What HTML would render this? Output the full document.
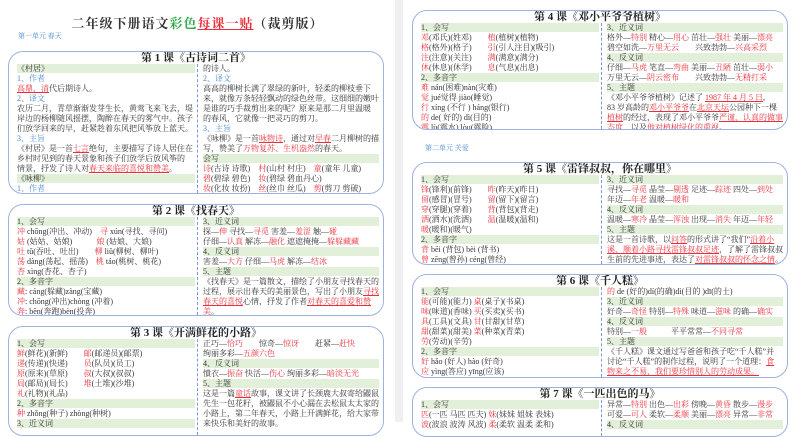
<!DOCTYPE html>
<html><head><meta charset="utf-8"><style>
*{margin:0;padding:0;box-sizing:border-box}
body{width:800px;height:422px;overflow:hidden;background:#fff;position:relative;font-family:"Liberation Serif","Noto Serif CJK SC",serif;font-size:8px;color:#333}
.pg{position:absolute;top:0;height:422px;background:#fff}
.gap{position:absolute;left:395px;top:0;width:8px;height:422px;background:#f0f0f2}
.c{position:absolute;border:1.5px solid #9db2e0;border-radius:15px;width:376px;overflow:hidden}
.t{position:absolute;left:0;right:0;top:0;text-align:center;font-size:11px;line-height:12px;color:#222;font-weight:bold}
.col{position:absolute;top:12px;width:178px}
.L{left:8px}.R{left:194px;width:176px}
.dv{position:absolute;left:188px;top:12px;bottom:0;border-left:1px dashed #7a9ad6}
.l{height:10px;line-height:10px;white-space:nowrap;overflow:hidden;font-size:8px}
.h{background:#e2efd9;height:9px;line-height:9px;margin-bottom:1px;font-size:8px}
.b{color:#4a8cd2}
.r{color:#e8303a}
.u{text-decoration:underline}
</style></head><body>
<div class="gap"></div>
<div style="position:absolute;left:0;top:13px;width:395px;text-align:center;font-size:13px;font-weight:bold;letter-spacing:1px">二年级下册语文<span style="color:#2eaa4a">彩色</span><span class="r u">每课一贴</span>（裁剪版）</div>
<div class="b" style="position:absolute;left:18px;top:31px;font-size:7px">第一单元 春天</div>

<div class="c" style="left:8px;top:51px;height:143px">
<div class="t">第 1 课《古诗词二首》</div><div class="dv"></div>
<div class="col L">
<div class="h">《村居》</div><div class="l b">1、作者</div><div class="l"><span class="r u">高鼎，清</span>代后期诗人。</div>
<div class="l b">2、译文</div><div class="l">农历二月，青草渐渐发芽生长，黄莺飞来飞去，堤</div><div class="l">岸边的杨柳随风摇摆，陶醉在春天的雾气中。孩子</div><div class="l">们放学回来的早，赶紧趁着东风把风筝放上蓝天。</div>
<div class="l b">3、主旨</div><div class="l">《村居》是一首<span class="r u">七言</span>绝句，主要描写了诗人居住在</div><div class="l">乡村时见到的春天景象和孩子们放学后放风筝的</div><div class="l">情景，抒发了诗人对<span class="r u">春天来临的喜悦和赞美</span>。</div>
<div class="h">《咏柳》</div><div class="l b">1、作者</div><div class="l"><span class="r u">贺知章</span>，字季真，自号四明狂客，是<span class="r u">盛唐</span>时期有名</div>
</div>
<div class="col R">
<div class="l">的诗人。</div><div class="l b">2、译文</div><div class="l">高高的柳树长满了翠绿的新叶，轻柔的柳枝垂下</div><div class="l">来，就像万条轻轻飘动的绿色丝带。这细细的嫩叶</div><div class="l">是谁的巧手裁剪出来的呢？原来是那二月里温暖</div><div class="l">的春风，它就像一把灵巧的剪刀。</div>
<div class="l b">3、主旨</div><div class="l">《咏柳》是一首<span class="r u">咏物诗</span>，通过对<span class="r u">早春</span>二月柳树的描</div><div class="l">写，赞美了<span class="r">万物复苏、生机盎然</span>的春天。</div>
<div class="h">会写</div>
<div class="l"><span class="r">诗</span>(古诗 诗歌)　<span class="r">村</span>(山村 村庄)　<span class="r">童</span>(童年 儿童)</div>
<div class="l"><span class="r">碧</span>(碧绿 碧色)　<span class="r">妆</span>(碧绿 碧血丹心)</div>
<div class="l"><span class="r">妆</span>(化妆 妆扮)　<span class="r">丝</span>(丝巾 丝瓜)　<span class="r">剪</span>(剪刀 剪破)</div>
</div></div>

<div class="c" style="left:8px;top:204px;height:112px">
<div class="t">第 2 课《找春天》</div><div class="dv"></div>
<div class="col L">
<div class="h">1、会写</div>
<div class="l"><span class="r">冲</span> chōng(冲出、冲动)　<span class="r">寻</span> xún(寻找、寻问)</div>
<div class="l"><span class="r">姑</span> (姑姑、姑娘)　　　<span class="r">娘</span> (姑娘、大娘)</div>
<div class="l"><span class="r">吐</span> tǔ(吞吐、吐出)　　<span class="r">柳</span> liǔ(柳树、柳叶)</div>
<div class="l"><span class="r">荡</span> dàng(荡起、摇荡)　<span class="r">桃</span> táo(桃树、桃花)</div>
<div class="l"><span class="r">杏</span> xìng(杏花、杏子)</div>
<div class="h">2、多音字</div>
<div class="l"><span class="r">藏</span>: cáng(躲藏)zàng(宝藏)</div>
<div class="l"><span class="r">冲</span>: chōng(冲出)chòng (冲着)</div>
<div class="l"><span class="r">奔</span>: bēn(奔跑)bèn(投奔)</div>
</div>
<div class="col R">
<div class="h">3、近义词</div>
<div class="l">探—<span class="r">伸</span> 寻找—<span class="r">寻觅</span> 害羞—<span class="r">羞涩</span> 触—<span class="r">碰</span></div>
<div class="l">仔细—<span class="r">认真</span> 解冻—<span class="r">融化</span> 遮遮掩掩—<span class="r">躲躲藏藏</span></div>
<div class="h">4、反义词</div>
<div class="l">害羞—<span class="r">大方</span> 仔细—<span class="r">马虎</span> 解冻—<span class="r">结冰</span></div>
<div class="h">5、主题</div>
<div class="l">《找春天》是一篇散文，描绘了小朋友寻找春天的</div><div class="l">过程，展示出春天的美丽景色，写出了小朋友<span class="r u">寻找</span></div><div class="l"><span class="r u">春天的喜悦</span>心情，抒发了作者<span class="r u">对春天的喜爱和赞</span></div><div class="l"><span class="r u">美</span>。</div>
</div></div>

<div class="c" style="left:8px;top:326px;height:110px">
<div class="t">第 3 课《开满鲜花的小路》</div><div class="dv"></div>
<div class="col L">
<div class="h">1、会写</div>
<div class="l"><span class="r">鲜</span>(鲜花)(新鲜)　　<span class="r">邮</span>(邮递员)(邮票)</div>
<div class="l"><span class="r">递</span>(传递)(快递)　　<span class="r">员</span>(队员)(员工)</div>
<div class="l"><span class="r">原</span>(原来)(草原)　　<span class="r">叔</span>(大叔)(叔叔)</div>
<div class="l"><span class="r">局</span>(邮局)(局长)　　<span class="r">堆</span>(土堆)(沙堆)</div>
<div class="l"><span class="r">礼</span>(礼物)(礼品)</div>
<div class="h">2、多音字</div>
<div class="l"><span class="r">种</span> zhǒng(种子) zhòng(种树)</div>
<div class="h">3、近义词</div>
</div>
<div class="col R">
<div class="l">正巧—<span class="r">恰巧</span>　　惊奇—<span class="r">惊讶</span>　　赶紧—<span class="r">赶快</span></div>
<div class="l">绚丽多彩—<span class="r">五颜六色</span></div>
<div class="h">4、反义词</div>
<div class="l">憤衣—<span class="r">振奋</span> 快活—<span class="r">伤心</span> 绚丽多彩—<span class="r">暗淡无光</span></div>
<div class="h">5、主题</div>
<div class="l">这是一篇<span class="r u">童话</span>故事，课文讲了长颈鹿大叔寄给鼹鼠</div><div class="l">先生一包花籽，被鼹鼠不小心漏在去松鼠太太家的</div><div class="l">小路上，第二年春天，小路上开满鲜花，给大家带</div><div class="l">来快乐和美好的故事。</div>
</div></div>

<div class="c" style="left:412px;top:10px;height:120px">
<div class="t">第 4 课《邓小平爷爷植树》</div><div class="dv"></div>
<div class="col L">
<div class="h">1、会写</div>
<div class="l"><span class="r">邓</span>(邓氏)(姓邓)　　<span class="r">植</span>(植树)(植物)</div>
<div class="l"><span class="r">格</span>(格外)(格子)　　<span class="r">引</span>(引人注目)(吸引)</div>
<div class="l"><span class="r">注</span>(注意)(关注)　　<span class="r">满</span>(满意)(满分)</div>
<div class="l"><span class="r">休</span>(休息)(休学)　　<span class="r">息</span>(气息)(出息)</div>
<div class="h">2、多音字</div>
<div class="l"><span class="r">难</span> nán(困难)nàn(灾难)</div>
<div class="l"><span class="r">觉</span> jué觉得 jiào(睡觉)</div>
<div class="l"><span class="r">行</span> xíng (不行 ) háng(银行)</div>
<div class="l"><span class="r">的</span> de( 好的) dì(目的)</div>
<div class="l"><span class="r">露</span> lù(露水) lòu(露脸)</div>
</div>
<div class="col R">
<div class="h">3、近义词</div>
<div class="l">格外—<span class="r">特别</span> 精心—<span class="r">用心</span> 茁壮—<span class="r">强壮</span> 美丽—<span class="r">漂亮</span></div>
<div class="l">碧空如洗—<span class="r">万里无云</span>　　兴致勃勃—<span class="r">兴高采烈</span></div>
<div class="h">4、反义词</div>
<div class="l">仔细—<span class="r">马虎</span> 笔直—<span class="r">弯曲</span> 美丽—<span class="r">丑陋</span> 茁壮—<span class="r">弱小</span></div>
<div class="l">万里无云—<span class="r">阴云密布</span>　　兴致勃勃—<span class="r">无精打采</span></div>
<div class="h">5、主题</div>
<div class="l">《邓小平爷爷植树》记述了 <span class="r u">1987 年 4 月 5 日</span>,</div><div class="l">83 岁高龄的<span class="r u">邓小平爷爷</span>在<span class="r u">北京天坛</span>公园种下一棵</div><div class="l"><span class="r u">植树</span>的经过，表现了邓小平爷爷<span class="r u">严谨、认真的做事</span></div><div class="l"><span class="r u">态度</span>，以及<span class="r u">他对植树绿化的重视</span>。</div>
</div></div>

<div class="b" style="position:absolute;left:425px;top:143px;font-size:7px">第二单元 关爱</div>

<div class="c" style="left:412px;top:162px;height:103px">
<div class="t">第 5 课《雷锋叔叔，你在哪里》</div><div class="dv"></div>
<div class="col L">
<div class="h">1、会写</div>
<div class="l"><span class="r">锋</span>(锋利)(前锋)　　<span class="r">昨</span>(昨天)(昨日)</div>
<div class="l"><span class="r">留</span>(感冒)(冒号)　　<span class="r">留</span>(留下)(留言)</div>
<div class="l"><span class="r">穿</span>(穿腿)(穿着)　　<span class="r">背</span>(背包)(背走)</div>
<div class="l"><span class="r">洒</span>(洒水)(洗洒)　　<span class="r">温</span>(温暖)(温和)</div>
<div class="l"><span class="r">暖</span>(暖和)(暖气)</div>
<div class="h">2、多音字</div>
<div class="l"><span class="r">背</span> bēi (背包) bèi (背书)</div>
<div class="l"><span class="r">曾</span> zēng(曾孙) céng(曾经)</div>
</div>
<div class="col R">
<div class="h">3、近义词</div>
<div class="l">寻找—<span class="r">寻觅</span> 晶莹—<span class="r">剔透</span> 足迹—<span class="r">踪迹</span> 四处—<span class="r">到处</span></div>
<div class="l">年迈—<span class="r">年老</span> 温暖—<span class="r">暖和</span></div>
<div class="h">4、反义词</div>
<div class="l">温暖—<span class="r">寒冷</span> 晶莹—<span class="r">浑浊</span> 出现—<span class="r">消失</span> 年迈—<span class="r">年轻</span></div>
<div class="h">5、主题</div>
<div class="l">这是一首诗歌，以<span class="r u">问答</span>的形式讲了“我们”<span class="r u">沿着小</span></div><div class="l"><span class="r u">溪、顺着小路寻找雷锋叔叔足迹</span>，了解了雷锋叔叔</div><div class="l">生前的先进事迹，表达了<span class="r u">对雷锋叔叔的怀念之情</span>。</div>
</div></div>

<div class="c" style="left:412px;top:274px;height:104px">
<div class="t">第 6 课《千人糕》</div><div class="dv"></div>
<div class="col L">
<div class="h">1、会写</div>
<div class="l"><span class="r">能</span>(可能)(能力) <span class="r">桌</span>(桌子)(书桌)</div>
<div class="l"><span class="r">味</span>(味道)(香味) <span class="r">买</span>(买卖)(买书)</div>
<div class="l"><span class="r">具</span>(工具)(文具) <span class="r">甘</span>(甘甜)(甘草)</div>
<div class="l"><span class="r">甜</span>(甜菜)(甜美) <span class="r">菜</span>(种菜)(青菜)</div>
<div class="l"><span class="r">劳</span>(劳动)(辛劳)</div>
<div class="h">2、多音字</div>
<div class="l"><span class="r">好</span> hǎo (好人) hào (好奇)</div>
<div class="l"><span class="r">应</span> yìng(答应) yīng(应该)</div>
</div>
<div class="col R">
<div class="l"><span class="r">的</span> de (好的)dí(的确)dì(目的 )dī(的士)</div>
<div class="h">3、近义词</div>
<div class="l">好奇—<span class="r">奇怪</span> 特别—<span class="r">特殊</span> 味道—<span class="r">滋味</span> 的确—<span class="r">确实</span></div>
<div class="h">4、反义词</div>
<div class="l">特别—<span class="r">一般</span>　　　平平常常—<span class="r">不同寻常</span></div>
<div class="h">5、主题</div>
<div class="l">《千人糕》课文通过写爸爸和孩子吃“千人糕”并</div><div class="l">讨论“千人糕”的制作过程，说明了一个道理：<span class="r u">食</span></div><div class="l"><span class="r u">物来之不易，我们要珍惜别人的劳动成果。</span></div>
</div></div>

<div class="c" style="left:412px;top:387px;height:50px">
<div class="t">第 7 课《一匹出色的马》</div><div class="dv"></div>
<div class="col L">
<div class="h">1、会写</div>
<div class="l"><span class="r">匹</span>(一匹 马匹 匹夫) <span class="r">妹</span>(妹妹 姐妹 表妹)</div>
<div class="l"><span class="r">波</span>(波浪 波涛 风波) <span class="r">柔</span>(柔软 温柔 柔和)</div>
</div>
<div class="col R">
<div class="l">异常—<span class="r">特别</span> 出色—<span class="r">出彩</span> 傍晚—<span class="r">黄昏</span> 散步—<span class="r">漫步</span></div>
<div class="l">可爱—<span class="r">可人</span> 柔软—<span class="r">柔顺</span> 美丽—<span class="r">漂亮</span> 异常—<span class="r">非常</span></div>
<div class="h">4、反义词</div>
</div></div>
</body></html>
